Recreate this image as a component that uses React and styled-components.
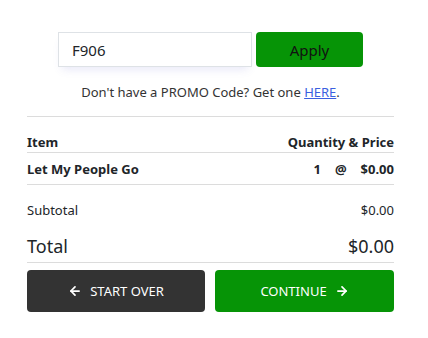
import React, { useState } from 'react';
import styled, { createGlobalStyle } from 'styled-components';
import { ArrowLeft, ArrowRight } from 'lucide-react';

const GlobalStyle = createGlobalStyle`
  *, *::before, *::after {
    box-sizing: border-box;
  }

  body {
    margin: 0;
    background: #fff;
    font-family: "Noto Sans", "Open Sans", sans-serif;
    color: #212529;
  }
`

const Page = styled.div`
  width: 367px;
  margin-left: 27px;
  padding-top: 32px;
`

const PromoForm = styled.div`
  display: flex;
  justify-content: center;
  gap: 4px;
`

const PromoInput = styled.input`
  width: 194px;
  height: 35px;
  border: 1px solid #dee2e6;
  padding: 0 13px;
  font: inherit;
  font-size: 15px;
  color: #212529;
  box-shadow: 0 6px 10px -4px rgba(90, 90, 200, 0.15);
  outline: none;
`

const ApplyButton = styled.button`
  width: 107px;
  height: 35px;
  border: none;
  border-radius: 4px;
  background: #069406;
  color: #111;
  font: inherit;
  font-size: 15px;
`

const PromoNote = styled.p`
  margin: 16px 0 0;
  text-align: center;
  font-size: 13px;
  color: #333;
  line-height: 18px;

  a {
    color: #3b5fe0;
  }
`

const Divider = styled.hr`
  margin: 15px 0 0;
  border: none;
  border-top: 1px solid #dcdcdc;
`

const TableRow = styled.div`
  display: flex;
  justify-content: space-between;
  align-items: center;
  height: ${p => p.$height}px;
  padding-top: ${p => p.$top || 0}px;
  padding-bottom: ${p => p.$bottom || 0}px;
  font-size: ${p => p.$size || 13}px;
  font-weight: ${p => (p.$bold ? 700 : 400)};
  border-bottom: ${p => (p.$line ? '1px solid #dcdcdc' : 'none')};
`

const QtyPrice = styled.div`
  display: flex;
  gap: 14px;
`

const Actions = styled.div`
  display: grid;
  grid-template-columns: 178px 179px;
  gap: 10px;
  margin-top: 7px;
`

const ActionButton = styled.button`
  height: 42px;
  border: none;
  border-radius: 4px;
  background: ${p => p.$bg};
  color: #fff;
  font: inherit;
  font-size: 13px;
  text-transform: uppercase;
  display: flex;
  align-items: center;
  justify-content: center;
  gap: 8px;
`

export default function App() {
  const [code, setCode] = useState('F906');

  return (
    <Page>
      <GlobalStyle />
      <PromoForm>
        <PromoInput value={code} onChange={e => setCode(e.target.value)} />
        <ApplyButton>Apply</ApplyButton>
      </PromoForm>
      <PromoNote>
        Don't have a PROMO Code? Get one <a href="#">HERE</a>.
      </PromoNote>
      <Divider />
      <TableRow $height={36} $top={15} $bold $line>
        <span>Item</span>
        <span>Quantity &amp; Price</span>
      </TableRow>
      <TableRow $height={32} $bold $line>
        <span>Let My People Go</span>
        <QtyPrice>
          <span>1</span>
          <span>@</span>
          <span>$0.00</span>
        </QtyPrice>
      </TableRow>
      <TableRow $height={50}>
        <span>Subtotal</span>
        <span>$0.00</span>
      </TableRow>
      <TableRow $height={28} $size={18} $bottom={6} $line>
        <span>Total</span>
        <span>$0.00</span>
      </TableRow>
      <Actions>
        <ActionButton $bg="#333333">
          <ArrowLeft size={14} strokeWidth={3} />
          Start Over
        </ActionButton>
        <ActionButton $bg="#069406">
          Continue
          <ArrowRight size={14} strokeWidth={3} />
        </ActionButton>
      </Actions>
    </Page>
  );
}
